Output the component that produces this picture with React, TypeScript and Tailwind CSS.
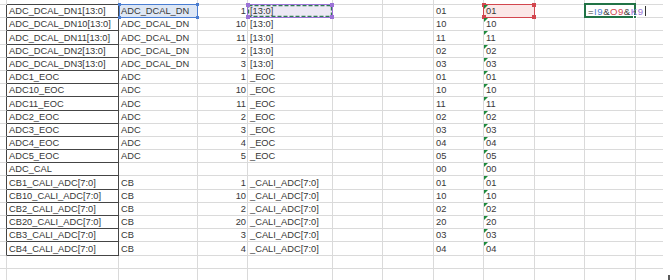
import type { ReactNode } from 'react';

type Row = { a: string; b: string; c: string; d: string; f: string };

const rows: Row[] = [
    { a: 'ADC_DCAL_DN1[13:0]', b: 'ADC_DCAL_DN', c: '1', d: '[13:0]', f: '01' },
    { a: 'ADC_DCAL_DN10[13:0]', b: 'ADC_DCAL_DN', c: '10', d: '[13:0]', f: '10' },
    { a: 'ADC_DCAL_DN11[13:0]', b: 'ADC_DCAL_DN', c: '11', d: '[13:0]', f: '11' },
    { a: 'ADC_DCAL_DN2[13:0]', b: 'ADC_DCAL_DN', c: '2', d: '[13:0]', f: '02' },
    { a: 'ADC_DCAL_DN3[13:0]', b: 'ADC_DCAL_DN', c: '3', d: '[13:0]', f: '03' },
    { a: 'ADC1_EOC', b: 'ADC', c: '1', d: '_EOC', f: '01' },
    { a: 'ADC10_EOC', b: 'ADC', c: '10', d: '_EOC', f: '10' },
    { a: 'ADC11_EOC', b: 'ADC', c: '11', d: '_EOC', f: '11' },
    { a: 'ADC2_EOC', b: 'ADC', c: '2', d: '_EOC', f: '02' },
    { a: 'ADC3_EOC', b: 'ADC', c: '3', d: '_EOC', f: '03' },
    { a: 'ADC4_EOC', b: 'ADC', c: '4', d: '_EOC', f: '04' },
    { a: 'ADC5_EOC', b: 'ADC', c: '5', d: '_EOC', f: '05' },
    { a: 'ADC_CAL', b: '', c: '', d: '', f: '00' },
    { a: 'CB1_CALI_ADC[7:0]', b: 'CB', c: '1', d: '_CALI_ADC[7:0]', f: '01' },
    { a: 'CB10_CALI_ADC[7:0]', b: 'CB', c: '10', d: '_CALI_ADC[7:0]', f: '10' },
    { a: 'CB2_CALI_ADC[7:0]', b: 'CB', c: '2', d: '_CALI_ADC[7:0]', f: '02' },
    { a: 'CB20_CALI_ADC[7:0]', b: 'CB', c: '20', d: '_CALI_ADC[7:0]', f: '20' },
    { a: 'CB3_CALI_ADC[7:0]', b: 'CB', c: '3', d: '_CALI_ADC[7:0]', f: '03' },
    { a: 'CB4_CALI_ADC[7:0]', b: 'CB', c: '4', d: '_CALI_ADC[7:0]', f: '04' },
];

// col0 | A | B | C | D | E | F | G | H | I | J | K | rest
const GRID =
    'grid grid-cols-[7px_112px_79px_50px_85px_50px_51px_50px_51px_50px_51px_27px_9px]';

// cell with gridlines; border colours are added separately so they never clash
const BOX = 'relative flex items-end whitespace-nowrap border-r border-b leading-[11px]';
const GRAY = 'border-r-[#dadada] border-b-[#dadada]';
const CELL = `${BOX} ${GRAY}`;

const Handles = ({ color, size = 'w-[3px] h-[3px]' }: { color: string; size?: string }) => (
    <>
        <span className={`absolute -left-[2px] -top-[2px] ${size} ${color}`} />
        <span className={`absolute -right-[2px] -top-[2px] ${size} ${color}`} />
        <span className={`absolute -left-[2px] -bottom-[2px] ${size} ${color}`} />
        <span className={`absolute -right-[2px] -bottom-[2px] ${size} ${color}`} />
    </>
);

const Tri = () => (
    <span className="absolute left-0 top-0 z-20 h-0 w-0 border-t-[4px] border-r-[4px] border-t-[#1d8a3c] border-r-transparent" />
);

const DataRow = ({ r, i }: { r: Row; i: number }) => {
    const first = i === 0;
    return (
        <div className={`${GRID} h-[13.2px]`}>
            <div className={`${BOX} border-r-[#454545] border-b-[#dadada]`} />
            <div className={`${BOX} border-r-[#454545] border-b-[#454545] pl-[2px]`}>{r.a}</div>
            <div className={`${CELL} pl-[2px] ${first ? 'bg-[#dde7f5]' : ''}`}>
                {r.b}
                {first && (
                    <span className="absolute left-0 -right-px -top-px -bottom-px z-10 border border-[#4a7dd0]">
                        <Handles color="bg-[#4a7dd0]" />
                    </span>
                )}
            </div>
            <div className={`${CELL} justify-end pr-[1px]`}>{r.c}</div>
            <div className={`${CELL} pl-[2px] ${first ? 'bg-[#ede9f5]' : ''}`}>
                {r.d}
                {first && (
                    <span className="absolute -left-px -right-px -top-px -bottom-px z-10 border border-[#9b72d6]">
                        <svg className="absolute inset-0 h-full w-full" preserveAspectRatio="none">
                            <rect
                                x="0.5"
                                y="0.5"
                                width="83"
                                height="11"
                                fill="none"
                                stroke="#2f7a52"
                                strokeWidth="1.4"
                                strokeDasharray="4 2"
                            />
                        </svg>
                        <Handles color="bg-[#9b72d6]" size="w-[4px] h-[4px]" />
                    </span>
                )}
            </div>
            <div className={CELL} />
            <div className={CELL} />
            <div className={`${CELL} pl-[2px]`}>{r.f}</div>
            <div className={`${CELL} pl-[2px] ${first ? 'bg-[#fbe7e7]' : ''}`}>
                <Tri />
                {r.f}
                {first && (
                    <span className="absolute -left-px -right-px -top-px -bottom-px z-10 border border-[#d2464e]">
                        <Handles color="bg-[#d2464e]" size="w-[4px] h-[4px]" />
                    </span>
                )}
            </div>
            <div className={CELL} />
            <div className={`${CELL} pl-[3px]`}>
                {first && (
                    <>
                        <span className="relative z-20 text-[9.6px] tracking-[0.5px]">
                            =<span className="text-[#4a7dd0]">I9</span>&amp;
                            <span className="text-[#d2464e]">O9</span>&amp;
                            <span className="text-[#9b72d6]">K9</span>
                            <span className="ml-[1px] inline-block h-[10px] w-px translate-y-[1px] bg-[#333]" />
                        </span>
                        <span className="absolute -left-px -right-px -top-[2px] -bottom-px z-10 border-2 border-[#217346]">
                            <span className="absolute -bottom-[3px] -right-[3px] h-[4px] w-[4px] border border-white bg-[#217346]" />
                        </span>
                    </>
                )}
            </div>
            <div className="relative border-b border-b-[#dadada]" />
            <div />
        </div>
    );
};

const FillerRow = ({ height, bottom }: { height: string; bottom: boolean }) => {
    const c = bottom ? CELL : 'relative border-r border-r-[#dadada]';
    const cells: ReactNode[] = [];
    for (let k = 0; k < 11; k++) cells.push(<div key={k} className={c} />);
    return (
        <div className={`${GRID} ${height}`}>
            {cells}
            <div className={bottom ? 'border-b border-b-[#dadada]' : ''} />
            <div />
        </div>
    );
};

export default function App() {
    return (
        <div className="relative h-[280px] w-[672px] overflow-hidden bg-white font-['Liberation_Sans',Arial,sans-serif] text-[9.3px] text-[#363636]">
            {/* partial row above the visible data */}
            <div className={`${GRID} h-[5px]`}>
                <div className={CELL} />
                <div className={`${BOX} border-r-[#dadada] border-b-[#454545]`} />
                {Array.from({ length: 9 }).map((_, k) => (
                    <div key={k} className={CELL} />
                ))}
                <div className="border-b border-b-[#dadada]" />
                <div />
            </div>

            {rows.map((r, i) => (
                <DataRow key={r.a} r={r} i={i} />
            ))}

            <FillerRow height="h-[13.2px]" bottom />
            <FillerRow height="h-[11px]" bottom={false} />

            <span className="absolute left-[668px] top-[275px] h-[5px] w-[2px] bg-[#5a5a5a]" />
        </div>
    );
}
